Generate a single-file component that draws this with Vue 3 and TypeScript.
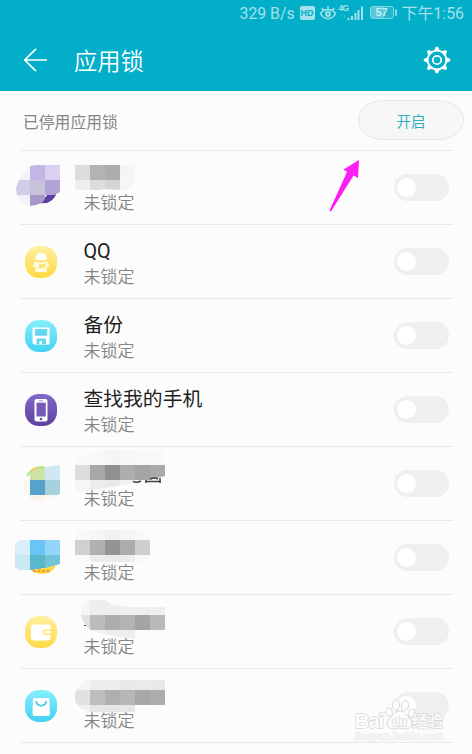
<script setup lang="ts">
import { reactive } from 'vue'

type IconKind = 'penguin' | 'disk' | 'phone' | 'wallet' | 'bag'
interface Block { x: number; y: number; w: number; h: number; fill: string }
interface AppRow { title?: string; icon?: IconKind; tone?: 'yellow' | 'cyan' | 'purple'; mosaic?: Block[]; locked: boolean }

const strip = (x: number, y: number, h: number, fills: string[], w = 15): Block[] =>
  fills.map((fill, i) => ({ x: x + i * w, y, w, h, fill }))

// Mosaic coordinates are relative to the top of their own row.
const rows = reactive<AppRow[]>([
  {
    locked: false,
    mosaic: [
      ...strip(75, 14, 15, ['#dddddd', '#b3b3b3', '#adadad', '#f5f5f5']),
      ...strip(75, 29, 10, ['#eeeeee', '#dddddd', '#d5d5d5', '#f6f6f6']),
    ],
  },
  { title: 'QQ', icon: 'penguin', tone: 'yellow', locked: false },
  { title: '备份', icon: 'disk', tone: 'cyan', locked: false },
  { title: '查找我的手机', icon: 'phone', tone: 'purple', locked: false },
  {
    locked: false,
    mosaic: [
      ...strip(75, 3, 15, ['#fafafa', '#f8f8f8', '#f5f5f5', '#f7f7f7', '#f9f9f9', '#f9f9f9']),
      ...strip(75, 18, 15, ['#dddddd', '#a8a8a8', '#909090', '#adadad', '#a4a4a4', '#aaaaaa']),
      ...strip(75, 33, 12, ['#f6f6f6', '#ececec', '#e8e8e8', '#f1f1f1']),
    ],
  },
  {
    locked: false,
    mosaic: [
      ...strip(75, 9, 10, ['#f9f9f9', '#f6f6f6', '#f0f0f0', '#f5f5f5', '#f9f9f9']),
      ...strip(75, 19, 15, ['#d0d0d0', '#b0b0b0', '#939393', '#acacac', '#cecece']),
      ...strip(75, 34, 7, ['#fafafa', '#ededed', '#eaeaea', '#ececec', '#f9f9f9']),
    ],
  },
  {
    icon: 'wallet', tone: 'yellow', locked: false,
    mosaic: [
      ...strip(75, 5, 15, ['#f5f5f5', '#eeeeee', '#eeeeee', '#f0f0f0', '#efefef', '#f0f0f0']),
      ...strip(75, 20, 15, ['#e1e1e1', '#bcbcbc', '#adadad', '#b3b3b3', '#a4a4a4', '#bababa']),
      ...strip(75, 35, 9, ['#fafafa', '#f2f2f2', '#eeeeee', '#ededed']),
    ],
  },
  {
    icon: 'bag', tone: 'cyan', locked: false,
    mosaic: [
      ...strip(75, 15, 10, ['#f5f5f5', '#ececec', '#eeeeee', '#e8e8e8', '#eaeaea', '#e8e8e8']).map(b => ({ ...b, y: 11 })),
      ...strip(75, 21, 15, ['#e1e1e1', '#bdbdbd', '#afafaf', '#b7b7b7', '#a8a8a8', '#adadad']),
      ...strip(75, 36, 7, ['#f0f0f0', '#e6e6e6', '#e6e6e6', '#e6e6e6']),
    ],
  },
])

const outlines: Record<number, string> = {
  0: 'M75 14H135V27Q134 37 125 39H120L105 38L99 39H75Z',
  4: 'M75 9L100 3H165V29L150 33L133 36L100 42L75 46Z',
  5: 'M75 9H150V41H75Z',
  6: 'M81 19C82 8 87 5 91 5H105L110 9L127 12H165V35H135V44L117 42L94 37Q83 31 81 20Z',
  7: 'M75 24Q80 11 92 11H165V36H135V43H90Q77 40 75 31Z',
}
</script>

<template>
  <div class="screen">
    <header class="head">
      <div class="status">
        <span class="speed">329 B/s</span>
        <span class="hd">HD</span>
        <svg class="eye" width="18" height="16" viewBox="0 0 18 16" fill="none" stroke="currentColor" stroke-width="1.500">
          <path d="M1.500 8.500C5 3.300 13 3.300 16.500 8.500C13 15.300 5 15.300 1.500 8.500ZM9 4V1M4.500 5.500L2.800 3M13.500 5.500L15.200 3" />
          <circle cx="9" cy="9" r="2.900" fill="currentColor" stroke="none" /><circle cx="9" cy="9" r="1" fill="#02aec8" stroke="none" />
        </svg>
        <span class="signal">
          <i class="net">4G</i>
          <svg width="25" height="16" viewBox="0 0 25 16" fill="currentColor">
            <path d="M8.500 13h2v2h-2zM12 11h2v4h-2zM15.500 8h2v7h-2zM18.500 5h2v10h-2zM22 1.500h2V15h-2z" />
            <path d="M2 9.500h1V13H2zM5 9.500h1V13H5z" opacity=".3" />
          </svg>
        </span>
        <span class="battery">57</span>
        <span class="clock">下午1:56</span>
      </div>
      <div class="bar">
        <svg class="back" width="26" height="26" viewBox="0 0 26 26" fill="none" stroke="#fff" stroke-width="1.700">
          <path d="M25 13H2M14 1.800L2.800 13L14 24.200" />
        </svg>
        <h1>应用锁</h1>
        <svg class="gear" width="28" height="28" viewBox="0 0 28 28" fill="none" stroke="#fff">
          <circle cx="14" cy="14" r="9.400" stroke-width="1.900" />
          <circle cx="14" cy="14" r="4.200" stroke-width="1.700" />
          <g fill="#fff" stroke="none">
            <path v-for="a in 8" :key="a" d="M11.300 4.800L12.700 1Q14 .2 15.300 1L16.700 4.800Z" :transform="`rotate(${a * 45} 14 14)`" />
          </g>
        </svg>
      </div>
    </header>

    <section class="summary">
      <span>已停用应用锁</span>
      <button>开启</button>
    </section>

    <main>
      <div v-for="(row, i) in rows" :key="i" class="row">
        <div class="icon" :class="row.tone">
          <svg v-if="row.icon" width="32" height="32" viewBox="0 0 32 32" fill="none">
            <g v-if="row.icon === 'penguin'">
              <path d="M10 13.500C10 4.500 22 4.500 22 13.500Q16 15 10 13.500Z" fill="#fff" />
              <path d="M10 15.300Q16 17.500 22 15.300L24.500 21L22.500 20.500C22 23 21 24 19.500 24.800H12.500C11 24 10 23 9.500 20.500L7.500 21Z" fill="#fffbd7" />
              <path d="M11.500 17.500Q16 19 21 17.300C21 24 12 25 11.500 17.500Z" fill="#ffe37b" />
              <path d="M12 16.500V19.500H14.500M10 25H22" stroke="#fff" stroke-width="1.300" />
            </g>
            <g v-else-if="row.icon === 'disk'">
              <path d="M7.500 7.500H24.500V24.500H9L7.500 23Z" fill="#fff" />
              <path d="M10 9H22.300V15.800H10ZM11.500 18.500H21V24H17V21H14.500V24H11.500Z" fill="#63d5f1" />
            </g>
            <g v-else-if="row.icon === 'phone'">
              <rect x="9.500" y="5" width="13" height="22.500" rx="2" fill="#fff" />
              <path d="M11.500 8.700H20.800V22.500H11.500Z" fill="#7658b9" />
              <path d="M14 6.900H18" stroke="#9b84d1" /><circle cx="16" cy="25" r="1.300" fill="#694aae" />
            </g>
            <g v-else-if="row.icon === 'wallet'">
              <path d="M6 11Q6 8.500 8.500 8.500H23Q25.500 8.500 25.500 11V13.500H20.500A2.500 2.500 0 0 0 20.500 19H25.500V22Q25.500 24.500 23 24.500H8.500Q6 24.500 6 22Z" fill="#fff" />
              <path d="M20.500 14.900H26V17.600H20.500A1.350 1.350 0 0 1 20.500 14.900Z" fill="#fff" />
            </g>
            <g v-else>
              <path d="M9.500 8H23Q24.300 8 24.300 9.500L25 24Q25 26 23 26H9.500Q7.500 26 7.500 24L8 9.500Q8 8 9.500 8Z" fill="#fff" />
              <path d="M11 11Q12 15.700 16.200 15.700T21.500 11" stroke="#47c8ea" stroke-width="1.600" />
            </g>
          </svg>
        </div>
        <div class="label">
          <strong>{{ row.title }}</strong>
          <span>未锁定</span>
        </div>
        <div class="toggle" :class="{ on: row.locked }" @click="row.locked = !row.locked"><i /></div>

        <svg v-if="row.mosaic" class="mosaic" width="240" height="73" viewBox="0 0 240 73" shape-rendering="crispEdges">
          <defs>
            <clipPath :id="`outline-${i}`"><path :d="outlines[i]" /></clipPath>
            <clipPath id="avatar"><path d="M30 15L36 14H60V41L52 45L45 48L42 52L36 54L30 55L22 52L17 45L16 38L18 31L24 21Z" /></clipPath>
            <clipPath id="globe"><path d="M26 27Q32 19 45 20L60 18V47L49 52L40 55L32 53L24 45L23 36Z" /></clipPath>
          </defs>
          <g :clip-path="`url(#outline-${i})`">
            <rect v-for="(b, n) in row.mosaic" :key="n" :x="b.x" :y="b.y" :width="b.w" :height="b.h" :fill="b.fill" />
          </g>
          <template v-if="i === 0">
            <path d="M40 52Q53 54 57 41L50 41Z" fill="#5b40a2" shape-rendering="auto" />
            <g clip-path="url(#avatar)">
              <path d="M15 14H30V29H15ZM15 44H30V56H15Z" fill="#f3f2f9" />
              <path d="M30 14H45V29H30Z" fill="#c2b6e6" /><path d="M45 14H60V29H45Z" fill="#d9d1ef" />
              <path d="M15 29H30V44H15Z" fill="#d3cce7" /><path d="M30 29H45V44H30Z" fill="#c8c3da" />
              <path d="M45 29H60V44H45Z" fill="#b0a4d6" /><path d="M30 44H45V56H30Z" fill="#a499c9" />
            </g>
          </template>
          <template v-else-if="i === 4">
            <g clip-path="url(#globe)">
              <path d="M22 33H30V48H22Z" fill="#f8f7ed" /><path d="M30 18H45V33H30Z" fill="#cce3a4" />
              <path d="M45 18H60V33H45Z" fill="#d1e7f4" /><path d="M30 33H45V48H30Z" fill="#55a2cc" />
              <path d="M45 33H60V48H45Z" fill="#a7d0dd" /><path d="M30 48H45V56H30Z" fill="#faf4eb" /><path d="M45 48H60V56H45Z" fill="#f5f7f9" />
            </g>
            <path d="M27 29Q32 20 44 20" fill="none" stroke="#a8e58b" stroke-width="2" shape-rendering="auto" />
            <path d="M31 24Q34 21 37 21" fill="none" stroke="#f5cb73" stroke-width="2" shape-rendering="auto" />
            <path d="M133 34.500Q137 36 141 34M145 34.500H161M146 33V36M160 31V36M150 32Q154 30 158 32" stroke="#444" fill="none" stroke-width="1.500" shape-rendering="auto" />
          </template>
          <template v-else-if="i === 5">
            <path d="M30 48Q35 53 43 53Q53 53 57 42Z" fill="#ffda49" shape-rendering="auto" />
            <path d="M33 50H51" stroke="#ef9d36" stroke-width="2.500" stroke-dasharray="3 1.500" shape-rendering="auto" />
            <path d="M50 45L57 42" stroke="#239fc3" stroke-width="2" />
            <path d="M20 19H30V34H15V23Z" fill="#d9effb" /><path d="M30 19H45V34H30Z" fill="#69c5f5" />
            <path d="M45 19H60V34H45Z" fill="#93d5f8" /><path d="M15 34H30V49H20L15 46Z" fill="#c8e9f1" />
            <path d="M30 34H45V47L30 49Z" fill="#5ab7ce" /><path d="M45 34H60V43L45 47Z" fill="#73c3da" />
          </template>
          <path v-else-if="i === 6" d="M84 30h2v1h-2z" fill="#555" />
        </svg>
      </div>
    </main>

    <svg class="pointer" width="32" height="54" viewBox="0 0 32 54"><path d="M30 1L29 19L24.500 16.500L2 52.500L.5 51.500L18 13L14.500 10.500Z" fill="#ff1df5" /></svg>

    <svg class="watermark" width="94" height="46" viewBox="0 0 94 46" fill="#fdfdfd" stroke="#d9d9d9">
      <ellipse cx="35" cy="16" rx="3.300" ry="4.300" transform="rotate(-15 35 16)" />
      <ellipse cx="42" cy="9" rx="3.600" ry="5" /><ellipse cx="51" cy="9.500" rx="3.600" ry="5" transform="rotate(10 51 9.500)" />
      <ellipse cx="57.500" cy="17" rx="3.200" ry="4.200" transform="rotate(20 57.500 17)" />
      <path d="M46 15C51 15 51 19 55 22C61 28 57 33 51 33Q46 31 40 33C34 33 30 28 36 22C41 19 41 15 46 15Z" />
      <g class="marks" stroke-width="1.500">
        <text x="1" y="32" font-size="20" textLength="29">Bai</text>
        <text x="38" y="30" font-size="13" textLength="15">du</text>
        <text class="han" x="58" y="31" font-size="15.500">经验</text>
        <text class="site" x="1" y="44" font-size="10" textLength="88" stroke="#e4e4e4" stroke-width="1">jingyan.baidu.com</text>
      </g>
    </svg>
  </div>
</template>

<style>
body { background: #fcfcfc; overflow: hidden; }
</style>

<style scoped>
.screen { position: relative; width: 472px; height: 754px; overflow: hidden; background: #fcfcfc; font-family: Roboto, "Noto Sans CJK SC", sans-serif; }
.head { height: 91px; background: #02aec8; color: #fff; }
.status { display: flex; align-items: center; justify-content: flex-end; height: 25px; padding-right: 8px; color: #a5e1ec; font-size: 16px; line-height: 25px; white-space: nowrap; }
.speed { padding-top: 1px; margin-right: 5px; font-size: 15.800px; }
.hd { width: 15px; height: 14px; margin-right: 4px; border-radius: 2px; background: #a5e1ec; color: #02aec8; font: bold 9px/14px "Liberation Sans", sans-serif; text-align: center; }
.eye { margin-right: 2px; }
.signal { position: relative; height: 16px; margin-right: 6px; }
.signal svg { display: block; }
.net { position: absolute; left: 0; top: -2px; font: bold 8.500px/10px "Liberation Sans", sans-serif; letter-spacing: -.8px; }
.battery { position: relative; box-sizing: border-box; width: 24px; height: 13px; margin-right: 8px; border: 1px solid #83d6e4; border-radius: 3px; background: linear-gradient(90deg, #57c9da 60%, #1fb7ce 60%); color: #cceff5; font: bold 11px/11px "Liberation Sans", sans-serif; text-align: center; }
.battery::after { content: ""; position: absolute; right: -4px; top: 2px; width: 2px; height: 7px; border-radius: 1px; background: #83d6e4; }
.clock { padding-top: 1px; font-size: 15.900px; }
.bar { display: flex; align-items: center; height: 66px; box-sizing: border-box; padding: 3px 21px 0 22px; }
.bar h1 { flex: 1; margin: 0 0 0 26px; font-family: "Noto Sans CJK SC", sans-serif; font-size: 23.300px; font-weight: 350; line-height: 34px; }
.summary { display: flex; align-items: center; justify-content: space-between; box-sizing: border-box; height: 60px; padding: 0 8px 2px 23px; color: #858585; font-size: 15.800px; background: linear-gradient(#ebebeb, #ebebeb) 20px 59px / 433px 1px no-repeat; }
.summary span { padding-top: 2px; }
button { box-sizing: border-box; width: 106px; height: 40px; padding: 1px 0 0; border: 1px solid #e7e7e7; border-radius: 26px / 20px; background: #f7f7f7; color: #2ab0c0; font: 14.500px "Noto Sans CJK SC", sans-serif; }
.row { position: relative; display: flex; align-items: center; box-sizing: border-box; width: 433px; height: 74px; margin-left: 20px; padding: 0 4px 0 5px; border-bottom: 1px solid #e9e9e9; }
.icon { width: 32px; height: 32px; border-radius: 14px; }
.icon svg { display: block; }
.yellow { background: linear-gradient(#fff0a1, #ffd944); }
.cyan { background: linear-gradient(#86effc, #43d0f3); }
.purple { background: linear-gradient(#8169ca, #5d409f); }
.label { flex: 1; display: flex; flex-direction: column; padding: 5px 0 0 26.500px; color: #1e1e1e; }
strong { height: 25px; font-size: 19.800px; font-weight: 400; line-height: 24px; }
.label span { height: 24px; font-size: 17px; font-weight: 350; line-height: 24px; color: #858585; }
.toggle { box-sizing: border-box; width: 55px; height: 27px; padding: 4px 3px; border-radius: 14px; background: #efefef; }
.toggle i { display: block; width: 19px; height: 19px; border-radius: 50%; background: #fff; }
.toggle.on { background: #02aec8; }
.toggle.on i { margin-left: auto; }
.mosaic { position: absolute; left: -20px; top: 0; pointer-events: none; }
.pointer { position: absolute; left: 329px; top: 159px; }
.watermark { position: absolute; left: 354px; top: 696px; pointer-events: none; }
.marks { font-family: "Liberation Sans", "Noto Sans CJK SC", sans-serif; font-weight: bold; paint-order: stroke; stroke-linejoin: round; }
.han { font-family: "Noto Sans CJK SC", sans-serif; font-weight: 500; }
.site { font-weight: 400; }
</style>
